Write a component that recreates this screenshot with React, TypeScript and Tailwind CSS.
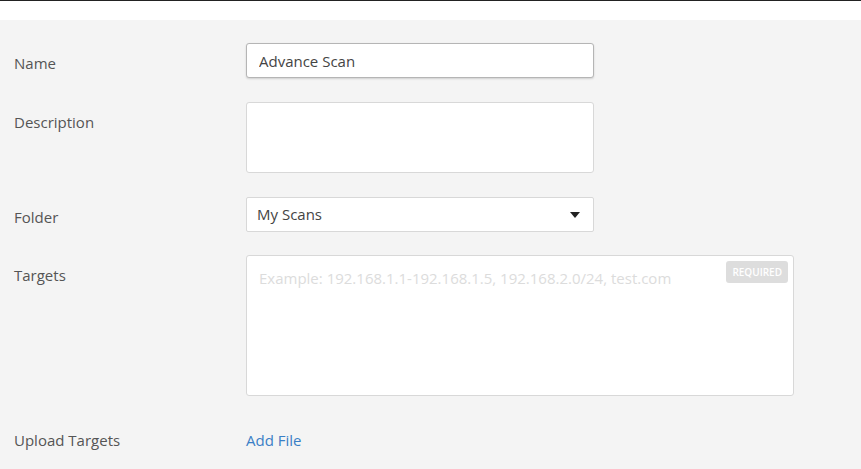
import { useState } from "react";

const Label = ({ children }: { children: string }) => (
  <div className="w-[232px] shrink-0 pt-[10px] text-[15px] leading-5 text-[#555]">
    {children}
  </div>
);

const ScanSettings = () => {
  const [name, setName] = useState("Advance Scan");
  const [description, setDescription] = useState("");
  const [targets, setTargets] = useState("");

  return (
    <div
      className="flex min-h-[469px] flex-col bg-white"
      style={{ fontFamily: '"Open Sans", "Noto Sans", sans-serif' }}
    >
      {/* Top bar */}
      <div className="h-[20px] border-t border-[#222] bg-white" />

      {/* Form */}
      <div className="flex flex-1 flex-col gap-[24px] bg-[#f4f4f4] pl-[14px] pt-[23px]">
        <div className="flex">
          <Label>Name</Label>
          <input
            value={name}
            onChange={(e) => setName(e.target.value)}
            className="h-[35px] w-[348px] rounded-[3px] border border-[#b5b5b5] bg-white px-[12px] text-[15px] text-[#444] shadow-[0_1px_2px_rgba(0,0,0,0.15)] outline-none"
          />
        </div>

        <div className="flex">
          <Label>Description</Label>
          <textarea
            value={description}
            onChange={(e) => setDescription(e.target.value)}
            className="h-[71px] w-[348px] resize-none rounded-[3px] border border-[#d8d8d8] bg-white px-[12px] py-[8px] text-[15px] text-[#444] outline-none"
          />
        </div>

        <div className="-mb-[1px] flex">
          <Label>Folder</Label>
          <div className="flex h-[35px] w-[348px] items-center justify-between rounded-[2px] border border-[#d8d8d8] bg-white pl-[10px] pr-[13px] text-[15px] text-[#444]">
            <span>My Scans</span>
            <svg width="10" height="6" viewBox="0 0 10 6">
              <path d="M0 0h10L5 6z" fill="#222" />
            </svg>
          </div>
        </div>

        <div className="flex">
          <Label>Targets</Label>
          <div className="relative">
            <textarea
              value={targets}
              onChange={(e) => setTargets(e.target.value)}
              placeholder="Example: 192.168.1.1-192.168.1.5, 192.168.2.0/24, test.com"
              className="block h-[141px] w-[548px] resize-none rounded-[3px] border border-[#d8d8d8] bg-white px-[12px] py-[11px] text-[15px] text-[#444] outline-none placeholder:text-[#dcdcdc]"
            />
            <span className="absolute right-[6px] top-[6px] rounded-[3px] bg-[#dddddd] px-[6px] py-[3px] text-[10px] font-semibold leading-4 text-white">
              REQUIRED
            </span>
          </div>
        </div>

        <div className="flex">
          <Label>Upload Targets</Label>
          <a href="#" className="pt-[10px] text-[15px] leading-5 text-[#3a7fc6]">
            Add File
          </a>
        </div>
      </div>
    </div>
  );
};

export default function App() {
  return <ScanSettings />;
}
